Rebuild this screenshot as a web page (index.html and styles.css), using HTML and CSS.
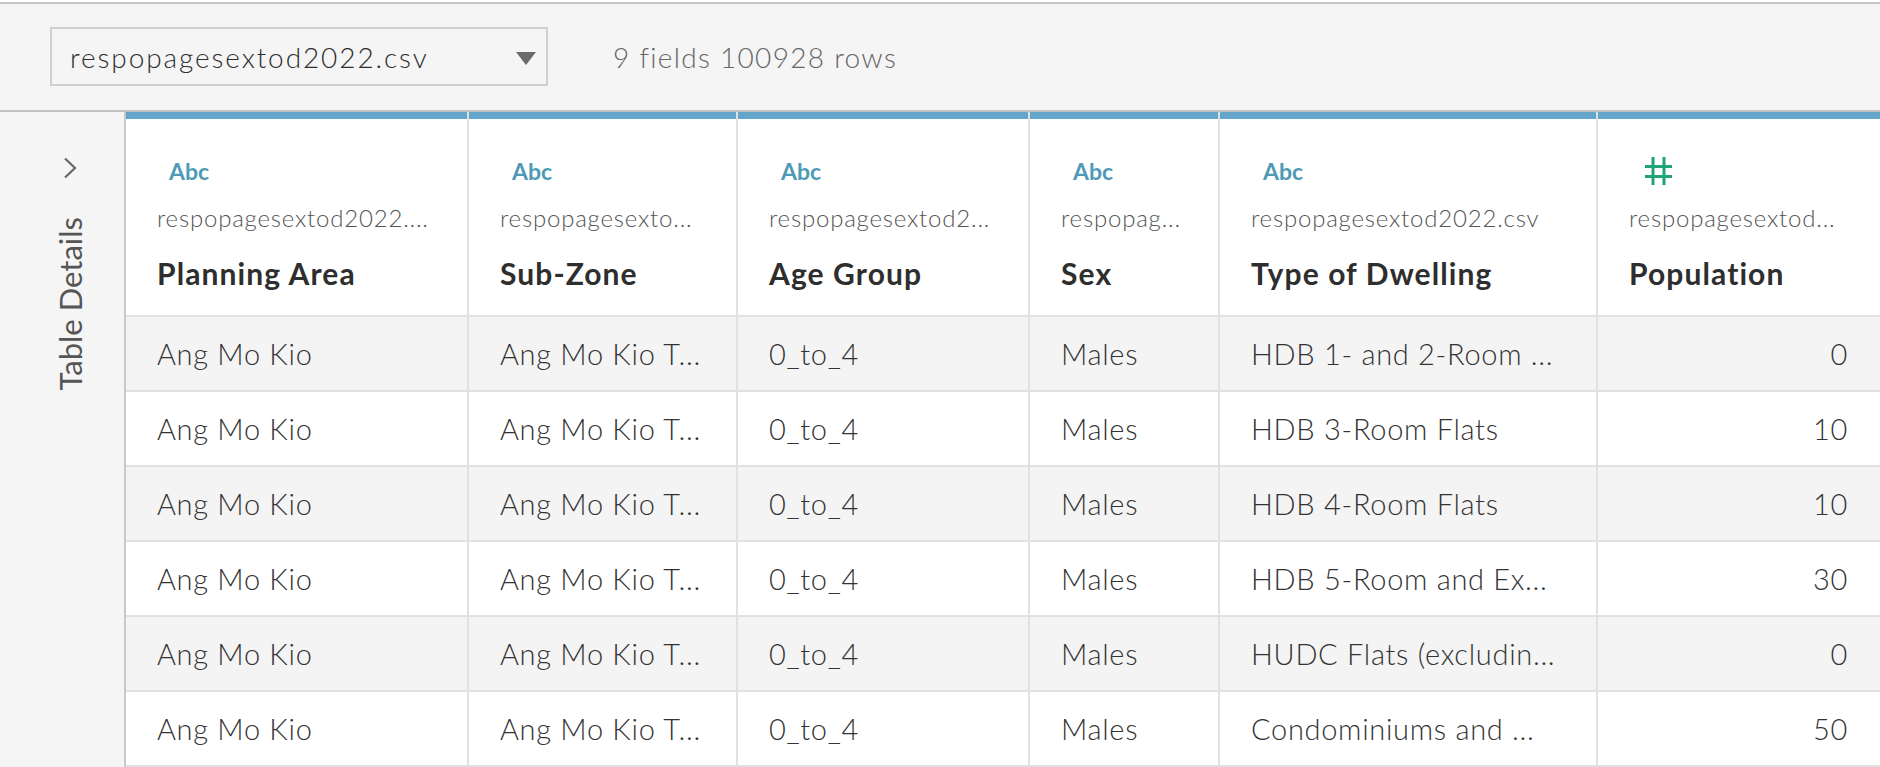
FILE: index.html
```html
<!DOCTYPE html>
<html lang="en">
<head>
<meta charset="utf-8">
<title>Data Source</title>
<link rel="stylesheet" href="styles.css">
</head>
<body>
<div class="toolbar">
  <div class="picker">
    <span class="picker-label">respopagesextod2022.csv</span>
    <svg class="picker-caret" width="20" height="13" viewBox="0 0 20 13"><polygon points="0,0 20,0 10,13" fill="#6b6b6b"/></svg>
  </div>
  <div class="count">9 fields 100928 rows</div>
</div>
<div class="main">
  <aside class="side">
    <svg class="side-chevron" width="14" height="22" viewBox="0 0 14 22"><polyline points="2,1.5 12,11 2,20.5" fill="none" stroke="#666" stroke-width="2.2"/></svg>
    <span class="side-label">Table Details</span>
  </aside>
  <div class="grid">
    <div class="row head">
      <div class="cell hcell"><span class="type abc">Abc</span><span class="src">respopagesextod2022....</span><span class="name">Planning Area</span></div>
      <div class="cell hcell"><span class="type abc">Abc</span><span class="src">respopagesexto...</span><span class="name">Sub-Zone</span></div>
      <div class="cell hcell"><span class="type abc">Abc</span><span class="src">respopagesextod2...</span><span class="name">Age Group</span></div>
      <div class="cell hcell"><span class="type abc">Abc</span><span class="src">respopag...</span><span class="name">Sex</span></div>
      <div class="cell hcell"><span class="type abc">Abc</span><span class="src">respopagesextod2022.csv</span><span class="name">Type of Dwelling</span></div>
      <div class="cell hcell last"><span class="type num"><svg width="27" height="28" viewBox="0 0 27 28"><g stroke="#21a378" stroke-width="3"><line x1="8" y1="0" x2="8" y2="28"/><line x1="19" y1="0" x2="19" y2="28"/><line x1="0" y1="9.5" x2="27" y2="9.5"/><line x1="0" y1="19.5" x2="27" y2="19.5"/></g></svg></span><span class="src">respopagesextod...</span><span class="name">Population</span></div>
    </div>
    <div class="row data">
      <div class="cell">Ang Mo Kio</div><div class="cell">Ang Mo Kio T...</div><div class="cell">0_to_4</div><div class="cell">Males</div><div class="cell">HDB 1- and 2-Room ...</div><div class="cell last numv">0</div>
    </div>
    <div class="row data">
      <div class="cell">Ang Mo Kio</div><div class="cell">Ang Mo Kio T...</div><div class="cell">0_to_4</div><div class="cell">Males</div><div class="cell">HDB 3-Room Flats</div><div class="cell last numv">10</div>
    </div>
    <div class="row data">
      <div class="cell">Ang Mo Kio</div><div class="cell">Ang Mo Kio T...</div><div class="cell">0_to_4</div><div class="cell">Males</div><div class="cell">HDB 4-Room Flats</div><div class="cell last numv">10</div>
    </div>
    <div class="row data">
      <div class="cell">Ang Mo Kio</div><div class="cell">Ang Mo Kio T...</div><div class="cell">0_to_4</div><div class="cell">Males</div><div class="cell">HDB 5-Room and Ex...</div><div class="cell last numv">30</div>
    </div>
    <div class="row data">
      <div class="cell">Ang Mo Kio</div><div class="cell">Ang Mo Kio T...</div><div class="cell">0_to_4</div><div class="cell">Males</div><div class="cell">HUDC Flats (excludin...</div><div class="cell last numv">0</div>
    </div>
    <div class="row data">
      <div class="cell">Ang Mo Kio</div><div class="cell">Ang Mo Kio T...</div><div class="cell">0_to_4</div><div class="cell">Males</div><div class="cell">Condominiums and ...</div><div class="cell last numv">50</div>
    </div>
    <div class="row data">
      <div class="cell"></div><div class="cell"></div><div class="cell"></div><div class="cell"></div><div class="cell"></div><div class="cell last numv"></div>
    </div>
  </div>
</div>
</body>
</html>
```
FILE: styles.css
```css
html, body {
  margin: 0;
  padding: 0;
  background: #ffffff;
  height: 100%;
  overflow: hidden;
}
body {
  font-family: Lato, "Open Sans", "Liberation Sans", sans-serif;
  color: #333333;
}

.toolbar {
  margin-top: 2px;
  height: 106px;
  box-sizing: content-box;
  border-top: 2px solid #c6c6c6;
  border-bottom: 2px solid #c4c4c4;
  background: #f5f5f5;
  display: flex;
  align-items: flex-start;
  padding-left: 50px;
}
.picker {
  margin-top: 23px;
  width: 498px;
  height: 59px;
  box-sizing: border-box;
  border: 2px solid #cfcfcf;
  display: flex;
  align-items: center;
  justify-content: space-between;
  padding: 0 10px 0 18px;
}
.picker-label {
  font-size: 28px;
  font-weight: 300;
  letter-spacing: 1.9px;
  color: #2e2e2e;
}
.picker-caret {
  margin-top: 3px;
}
.count {
  margin-top: 23px;
  height: 59px;
  margin-left: 65px;
  display: flex;
  align-items: center;
  font-size: 28px;
  font-weight: 300;
  letter-spacing: 1.3px;
  color: #666666;
}

.main {
  display: flex;
  height: calc(100vh - 112px);
  overflow: hidden;
}
.side {
  width: 124px;
  flex: none;
  background: #f5f5f5;
  border-right: 2px solid #c8c8c8;
  display: flex;
  flex-direction: column;
  align-items: center;
}
.side > * {
  margin-left: 16px;
}
.side .side-chevron {
  margin-top: 45px;
}
.side-label {
  margin-top: 38px;
  writing-mode: vertical-rl;
  transform: rotate(180deg);
  font-size: 31px;
  font-weight: 400;
  color: #555555;
  white-space: nowrap;
}

.grid {
  flex: 1;
  min-width: 0;
  overflow: hidden;
}
.row {
  display: grid;
  grid-template-columns: 343px 269px 292px 190px 378px 1fr;
}
.cell {
  border-right: 2px solid #e1e1e1;
  padding-left: 31px;
  white-space: nowrap;
  overflow: hidden;
}
.cell.last {
  border-right: none;
}
.head .cell {
  height: 203px;
  box-shadow: inset 0 7px 0 #63a6c9;
  background: #ffffff;
  display: flex;
  flex-direction: column;
  padding-top: 44px;
  box-sizing: border-box;
}
.type {
  height: 30px;
  line-height: 30px;
  padding-left: 12px;
  font-size: 23px;
  font-weight: 700;
  color: #4e9ab6;
}
.type.num {
  padding-left: 16px;
  display: flex;
  align-items: center;
}
.src {
  margin-top: 17px;
  height: 30px;
  line-height: 30px;
  font-size: 24px;
  font-weight: 300;
  letter-spacing: 0.8px;
  color: #555555;
}
.name {
  margin-top: 22px;
  height: 36px;
  line-height: 36px;
  font-size: 30px;
  font-weight: 700;
  letter-spacing: 1.1px;
  color: #2e2e2e;
}
.data .cell {
  border-top: 2px solid #e1e1e1;
  height: 73px;
  line-height: 73px;
  font-size: 29px;
  font-weight: 300;
  letter-spacing: 0.7px;
  color: #333333;
}
.data:nth-child(even) .cell {
  background: #f4f4f4;
}
.data:nth-child(odd) .cell {
  background: #ffffff;
}
.cell.numv {
  text-align: right;
  padding-right: 32px;
}
```
